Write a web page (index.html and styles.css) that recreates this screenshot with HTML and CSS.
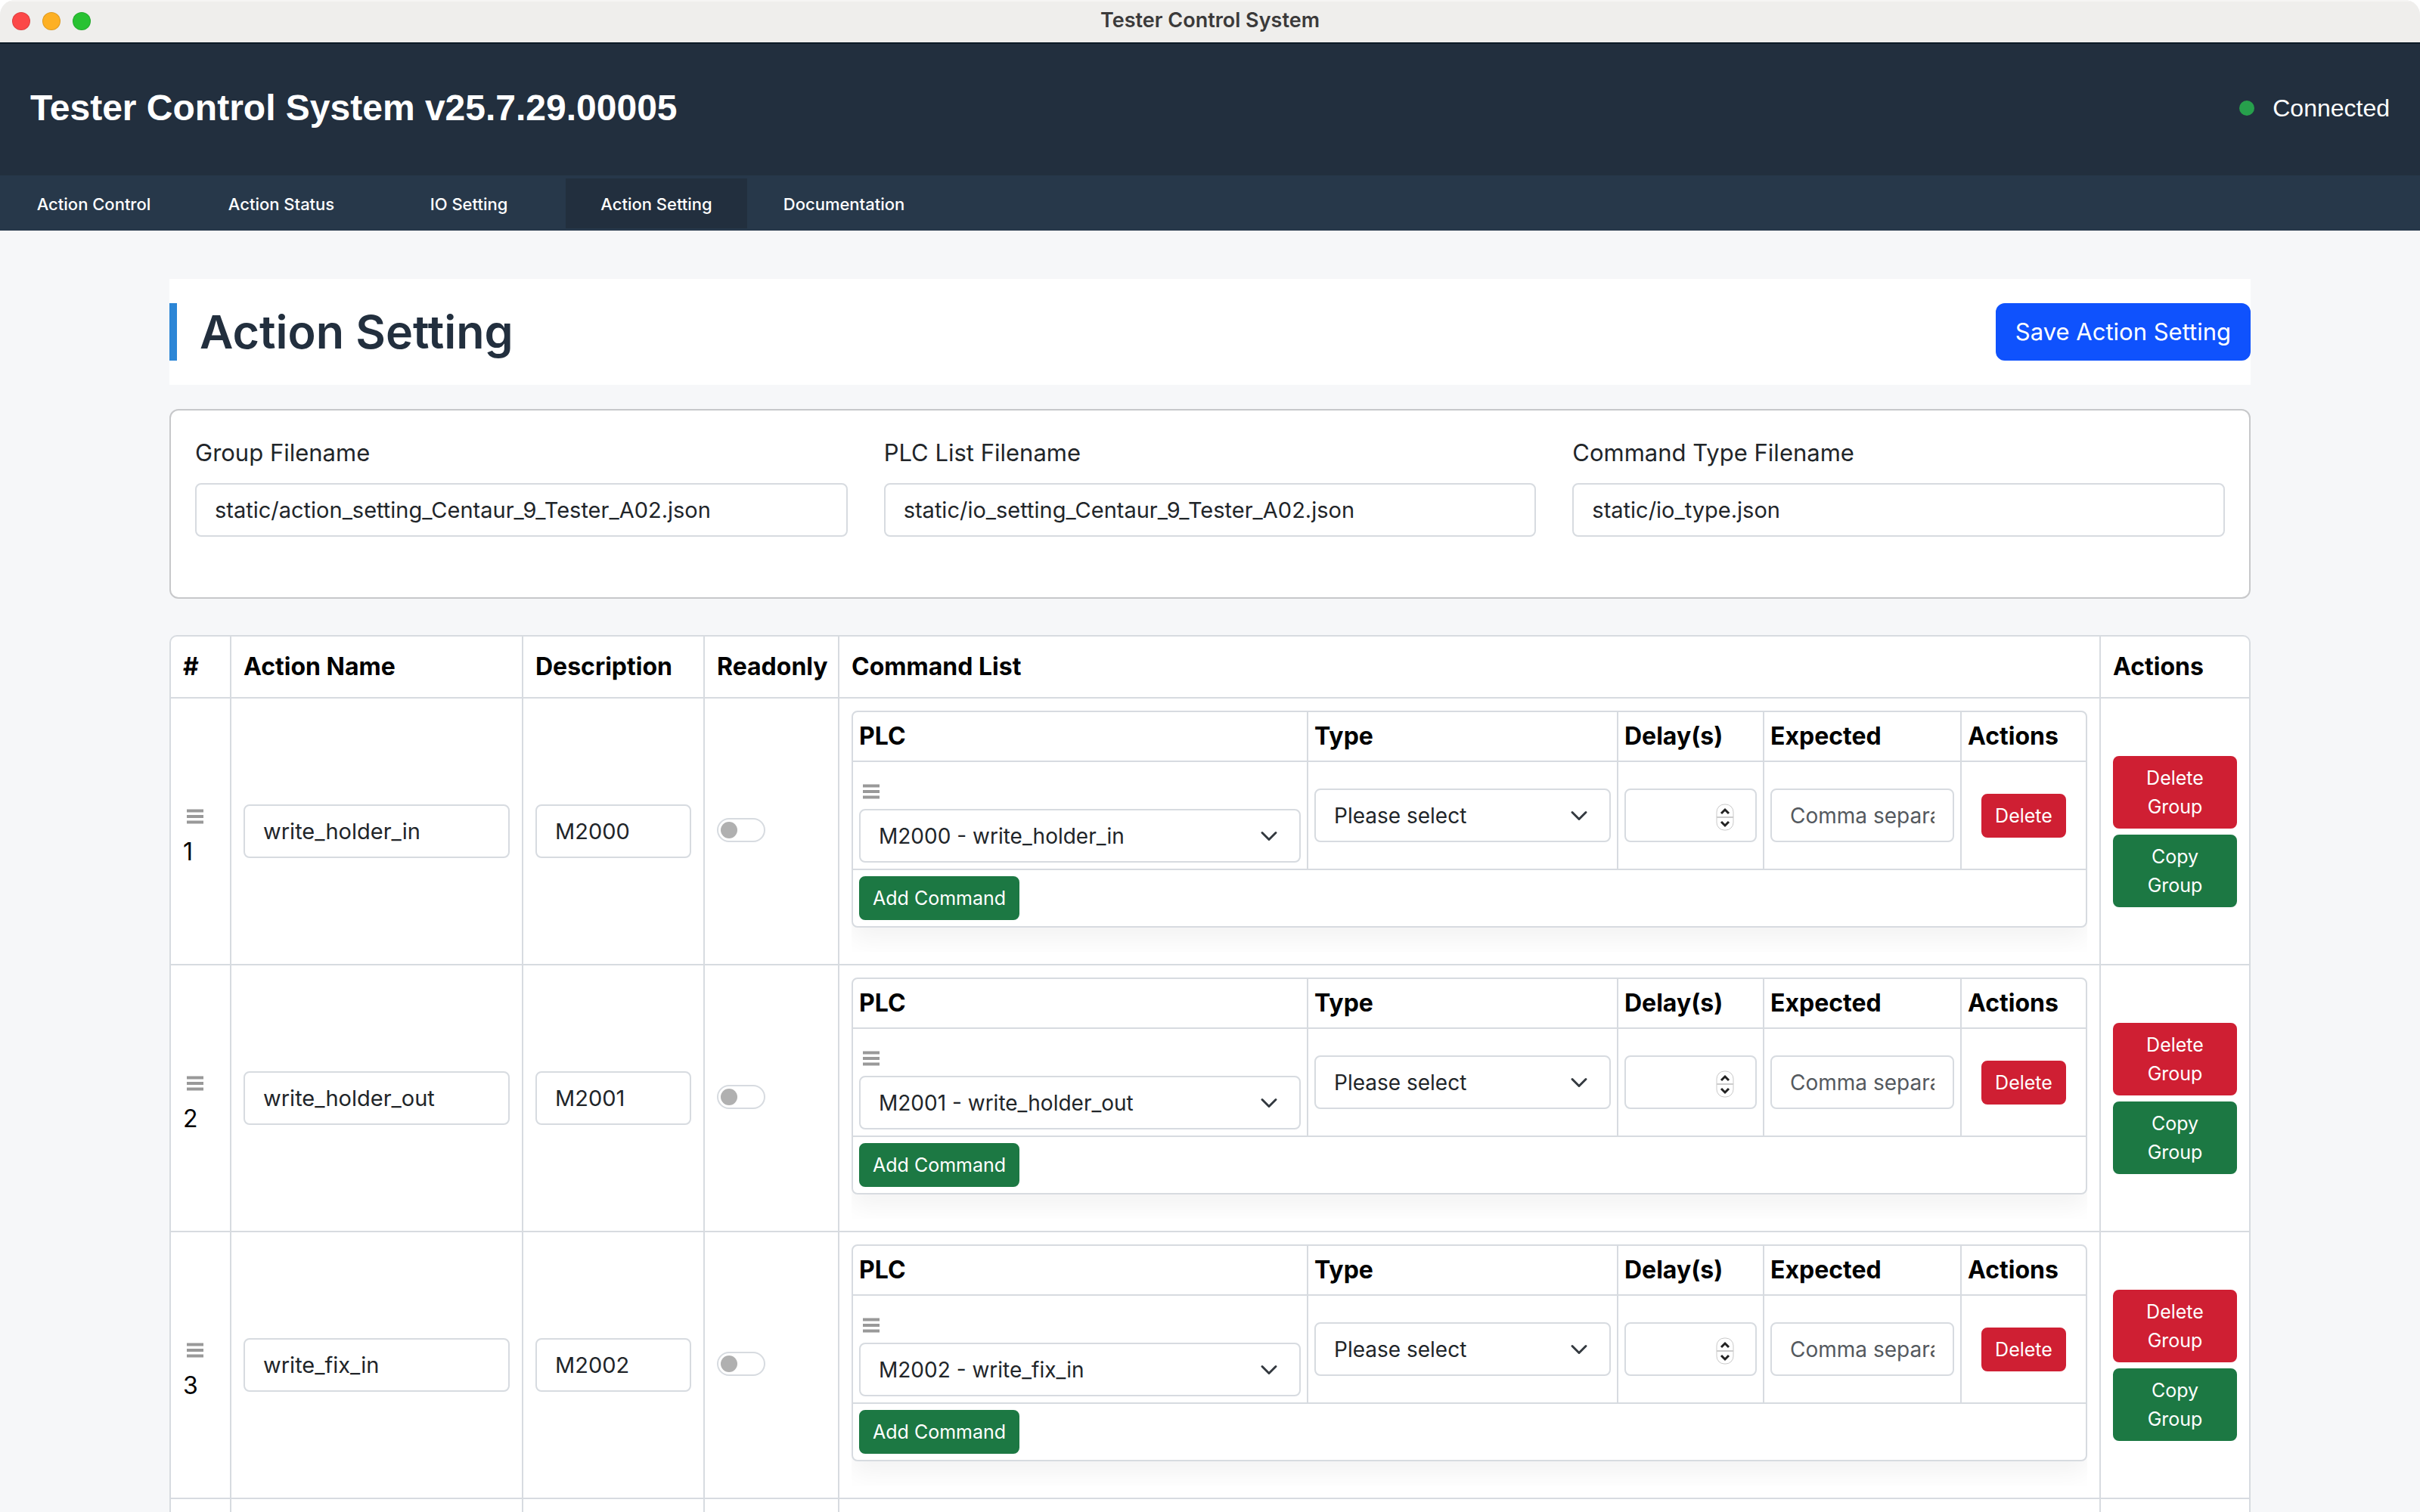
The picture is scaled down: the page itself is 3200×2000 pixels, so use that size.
FILE: index.html
```html
<!DOCTYPE html>
<html lang="en">
<head>
<meta charset="utf-8">
<title>Tester Control System</title>
<link rel="stylesheet" href="styles.css">
</head>
<body>
<div class="window">
  <div class="titlebar">
    <div class="lights"><span class="light close"></span><span class="light minimize"></span><span class="light maximize"></span></div>
    <div class="titlebar-text">Tester Control System</div>
  </div>
  <header class="app-header">
    <h1 class="app-title">Tester Control System v25.7.29.00005</h1>
    <div class="status"><span class="status-dot"></span>Connected</div>
  </header>
  <nav class="tabs">
    <a class="tab" href="#control">Action Control</a>
    <a class="tab" href="#status">Action Status</a>
    <a class="tab" href="#io">IO Setting</a>
    <a class="tab active" href="#setting">Action Setting</a>
    <a class="tab" href="#docs">Documentation</a>
  </nav>
  <main class="content">
    <div class="page-head">
      <h2 class="page-title">Action Setting</h2>
      <button class="btn primary" type="button">Save Action Setting</button>
    </div>
    <section class="files">
      <div class="field"><label for="group-file">Group Filename</label><input class="control" id="group-file" type="text" value="static/action_setting_Centaur_9_Tester_A02.json"></div>
      <div class="field"><label for="plc-file">PLC List Filename</label><input class="control" id="plc-file" type="text" value="static/io_setting_Centaur_9_Tester_A02.json"></div>
      <div class="field"><label for="type-file">Command Type Filename</label><input class="control" id="type-file" type="text" value="static/io_type.json"></div>
    </section>
    <table class="grid groups">
      <colgroup><col class="c-num"><col class="c-name"><col class="c-desc"><col class="c-ro"><col><col class="c-act"></colgroup>
      <thead><tr><th>#</th><th>Action Name</th><th>Description</th><th>Readonly</th><th>Command List</th><th>Actions</th></tr></thead>
      <tbody>
        <tr>
          <td><svg class="handle" viewBox="0 0 22 20" aria-hidden="true"><path d="M0 2.5h22M0 10h22M0 17.5h22"/></svg>1</td>
          <td><input class="control" type="text" aria-label="Action name" value="write_holder_in"></td>
          <td><input class="control" type="text" aria-label="Description" value="M2000"></td>
          <td><input class="switch" type="checkbox" aria-label="Readonly"></td>
          <td>
            <div class="commands">
              <table class="grid inner">
                <colgroup><col><col class="c-type"><col class="c-delay"><col class="c-exp"><col class="c-del"></colgroup>
                <thead><tr><th>PLC</th><th>Type</th><th>Delay(s)</th><th>Expected</th><th>Actions</th></tr></thead>
                <tbody>
                  <tr>
                    <td><svg class="handle" viewBox="0 0 22 20" aria-hidden="true"><path d="M0 2.5h22M0 10h22M0 17.5h22"/></svg><div class="pick"><select class="control" aria-label="PLC"><option>M2000 - write_holder_in</option></select><svg class="chevron" viewBox="0 0 16 16" aria-hidden="true"><path d="m2 5 6 6 6-6"/></svg></div></td>
                    <td><div class="pick"><select class="control" aria-label="Type"><option>Please select</option></select><svg class="chevron" viewBox="0 0 16 16" aria-hidden="true"><path d="m2 5 6 6 6-6"/></svg></div></td>
                    <td><div class="pick"><input class="control" type="number" aria-label="Delay in seconds"><svg class="stepper" viewBox="0 0 24 36" aria-hidden="true"><rect x="1" y="1" width="22" height="34" rx="10"/><path class="split" d="M1 18h22"/><path d="m7 13 5-5 5 5M7 24l5 5 5-5"/></svg></div></td>
                    <td><input class="control" type="text" aria-label="Expected" placeholder="Comma separated"></td>
                    <td class="center"><button class="btn small danger" type="button">Delete</button></td>
                  </tr>
                  <tr><td colspan="5"><button class="btn small success" type="button">Add Command</button></td></tr>
                </tbody>
              </table>
            </div>
          </td>
          <td><div class="stack"><button class="btn small danger" type="button">Delete Group</button><button class="btn small success" type="button">Copy Group</button></div></td>
        </tr>
        <tr>
          <td><svg class="handle" viewBox="0 0 22 20" aria-hidden="true"><path d="M0 2.5h22M0 10h22M0 17.5h22"/></svg>2</td>
          <td><input class="control" type="text" aria-label="Action name" value="write_holder_out"></td>
          <td><input class="control" type="text" aria-label="Description" value="M2001"></td>
          <td><input class="switch" type="checkbox" aria-label="Readonly"></td>
          <td>
            <div class="commands">
              <table class="grid inner">
                <colgroup><col><col class="c-type"><col class="c-delay"><col class="c-exp"><col class="c-del"></colgroup>
                <thead><tr><th>PLC</th><th>Type</th><th>Delay(s)</th><th>Expected</th><th>Actions</th></tr></thead>
                <tbody>
                  <tr>
                    <td><svg class="handle" viewBox="0 0 22 20" aria-hidden="true"><path d="M0 2.5h22M0 10h22M0 17.5h22"/></svg><div class="pick"><select class="control" aria-label="PLC"><option>M2001 - write_holder_out</option></select><svg class="chevron" viewBox="0 0 16 16" aria-hidden="true"><path d="m2 5 6 6 6-6"/></svg></div></td>
                    <td><div class="pick"><select class="control" aria-label="Type"><option>Please select</option></select><svg class="chevron" viewBox="0 0 16 16" aria-hidden="true"><path d="m2 5 6 6 6-6"/></svg></div></td>
                    <td><div class="pick"><input class="control" type="number" aria-label="Delay in seconds"><svg class="stepper" viewBox="0 0 24 36" aria-hidden="true"><rect x="1" y="1" width="22" height="34" rx="10"/><path class="split" d="M1 18h22"/><path d="m7 13 5-5 5 5M7 24l5 5 5-5"/></svg></div></td>
                    <td><input class="control" type="text" aria-label="Expected" placeholder="Comma separated"></td>
                    <td class="center"><button class="btn small danger" type="button">Delete</button></td>
                  </tr>
                  <tr><td colspan="5"><button class="btn small success" type="button">Add Command</button></td></tr>
                </tbody>
              </table>
            </div>
          </td>
          <td><div class="stack"><button class="btn small danger" type="button">Delete Group</button><button class="btn small success" type="button">Copy Group</button></div></td>
        </tr>
        <tr>
          <td><svg class="handle" viewBox="0 0 22 20" aria-hidden="true"><path d="M0 2.5h22M0 10h22M0 17.5h22"/></svg>3</td>
          <td><input class="control" type="text" aria-label="Action name" value="write_fix_in"></td>
          <td><input class="control" type="text" aria-label="Description" value="M2002"></td>
          <td><input class="switch" type="checkbox" aria-label="Readonly"></td>
          <td>
            <div class="commands">
              <table class="grid inner">
                <colgroup><col><col class="c-type"><col class="c-delay"><col class="c-exp"><col class="c-del"></colgroup>
                <thead><tr><th>PLC</th><th>Type</th><th>Delay(s)</th><th>Expected</th><th>Actions</th></tr></thead>
                <tbody>
                  <tr>
                    <td><svg class="handle" viewBox="0 0 22 20" aria-hidden="true"><path d="M0 2.5h22M0 10h22M0 17.5h22"/></svg><div class="pick"><select class="control" aria-label="PLC"><option>M2002 - write_fix_in</option></select><svg class="chevron" viewBox="0 0 16 16" aria-hidden="true"><path d="m2 5 6 6 6-6"/></svg></div></td>
                    <td><div class="pick"><select class="control" aria-label="Type"><option>Please select</option></select><svg class="chevron" viewBox="0 0 16 16" aria-hidden="true"><path d="m2 5 6 6 6-6"/></svg></div></td>
                    <td><div class="pick"><input class="control" type="number" aria-label="Delay in seconds"><svg class="stepper" viewBox="0 0 24 36" aria-hidden="true"><rect x="1" y="1" width="22" height="34" rx="10"/><path class="split" d="M1 18h22"/><path d="m7 13 5-5 5 5M7 24l5 5 5-5"/></svg></div></td>
                    <td><input class="control" type="text" aria-label="Expected" placeholder="Comma separated"></td>
                    <td class="center"><button class="btn small danger" type="button">Delete</button></td>
                  </tr>
                  <tr><td colspan="5"><button class="btn small success" type="button">Add Command</button></td></tr>
                </tbody>
              </table>
            </div>
          </td>
          <td><div class="stack"><button class="btn small danger" type="button">Delete Group</button><button class="btn small success" type="button">Copy Group</button></div></td>
        </tr>
        <tr><td></td><td></td><td></td><td></td><td></td><td></td></tr>
      </tbody>
    </table>
  </main>
</div>
</body>
</html>
```
FILE: styles.css
```css
* { box-sizing: border-box; }

html { background: #fff; }

body {
  margin: 0;
  font-family: Inter, "Noto Sans", sans-serif;
  font-size: 31px;
  line-height: 48px;
  color: #212529;
}

.window {
  display: flex;
  flex-direction: column;
  height: 100vh;
  overflow: hidden;
  border-radius: 20px 20px 0 0;
  background: #f6f7f9;
}

/* Window title bar */
.titlebar {
  display: grid;
  grid-template-columns: 1fr auto 1fr;
  align-items: center;
  flex: none;
  height: 56px;
  padding: 0 16px;
  background: #efeeec;
  box-shadow: inset 0 2px #f6f5f4;
}
.lights { display: flex; gap: 16px; }
.light { width: 24px; height: 24px; border-radius: 50%; border: 1px solid rgba(0, 0, 0, .12); }
.close { background: #fc4848; }
.minimize { background: #fdb024; }
.maximize { background: #28c232; }
.titlebar-text { padding-bottom: 2px; font-size: 27px; font-weight: 600; color: #3b3a3a; }

/* App header and tabs */
.app-header {
  display: flex;
  align-items: center;
  justify-content: space-between;
  flex: none;
  height: 176px;
  padding: 0 40px 4px;
  border-top: 2px solid #0d1a26;
  background: #222f3e;
  color: #fff;
  font-family: "Liberation Sans", Arial, sans-serif;
  font-size: 32px;
}
.app-title { margin: 0; font-size: 48px; font-weight: 700; }
.status { display: flex; align-items: center; gap: 24px; }
.status-dot { width: 20px; height: 20px; border-radius: 50%; background: #27a04c; }

.tabs {
  display: flex;
  gap: 8px;
  flex: none;
  height: 73px;
  padding: 4px 4px 3px;
  background: #27384a;
}
.tab {
  display: flex;
  align-items: center;
  justify-content: center;
  width: 240px;
  padding-top: 2px;
  color: #fff;
  font-size: 22px;
  font-weight: 500;
  text-decoration: none;
}
.tab.active { background: #222f3e; }

/* Page */
.content { flex: 1; min-height: 0; overflow: hidden; padding: 64px 7% 0; }

.page-head {
  display: flex;
  align-items: center;
  justify-content: space-between;
  padding: 32px 0;
  background: #fff;
}
.page-title {
  margin: 0;
  padding-left: 30px;
  border-left: 10px solid #2c86d6;
  color: #222f3e;
  font-size: 61px;
  font-weight: 600;
  line-height: 76px;
}

.files {
  display: grid;
  grid-template-columns: repeat(3, 1fr);
  gap: 48px;
  margin: 32px 0 48px;
  padding: 32px 32px 80px;
  border: 2px solid #c7c8ca;
  border-radius: 12px;
  background: #fff;
}
.field label { display: block; margin-bottom: 16px; }

.control {
  display: block;
  width: 100%;
  height: 71px;
  margin: 0;
  padding: 0 24px;
  border: 2px solid #d7dbe0;
  border-radius: 8px;
  background: #fff;
  color: #212529;
  font: inherit;
  font-size: 29px;
  appearance: none;
}
select.control { font-size: 28px; }
.control::placeholder { color: #54595e; opacity: 1; font-size: 28px; }
.control[type="number"] { appearance: textfield; }

.pick { display: grid; align-items: center; }
.pick > * { grid-area: 1 / 1; }
.pick svg { justify-self: end; margin-right: 30px; pointer-events: none; fill: none; }
.chevron { width: 24px; height: 24px; stroke: #343a40; stroke-width: 2; stroke-linecap: round; stroke-linejoin: round; }
.stepper { width: 24px; height: 36px; margin-top: 4px; stroke: #222; stroke-width: 3; }
.stepper rect { fill: #fff; stroke: #c9c9c9; stroke-width: 1; }
.stepper .split { stroke: #ccc; stroke-width: 2; }

.switch {
  display: block;
  width: 64px;
  height: 32px;
  margin: 0 0 4px;
  padding: 3px;
  border: 2px solid #d7dbe0;
  border-radius: 16px;
  background: #fff;
  appearance: none;
}
.switch::before { content: ""; display: block; width: 22px; height: 22px; border-radius: 50%; background: #b0b0b0; }

.btn {
  padding: 12px 24px;
  border: 2px solid transparent;
  border-radius: 12px;
  color: #fff;
  font: inherit;
  font-size: 31px;
  line-height: 48px;
}
.primary { background: #0f52fd; border-color: #0f52fd; }
.small { padding: 8px 16px; border-radius: 8px; font-size: 25px; line-height: 38px; }
.danger { background: #cf1f33; border-color: #cf1f33; }
.success { background: #1c7843; border-color: #1c7843; }
.stack { display: flex; flex-direction: column; gap: 8px; }

/* Tables */
.grid {
  width: 100%;
  table-layout: fixed;
  border: 2px solid #d7dbe0;
  border-radius: 10px;
  border-collapse: separate;
  border-spacing: 0;
  background: #fff;
  color: #000;
  font-size: 32px;
}
.grid th, .grid td {
  padding: 16px;
  border-right: 2px solid #d7dbe0;
  border-bottom: 2px solid #d7dbe0;
  text-align: left;
  vertical-align: middle;
}
.grid th { font-weight: 700; white-space: nowrap; }
.grid tr > :last-child { border-right: 0; }
.grid tbody tr:last-child > td { border-bottom: 0; }

.c-num { width: 80px; }
.c-name { width: 386px; }
.c-desc { width: 240px; }
.c-ro { width: 178px; }
.c-act { width: 196px; }

.commands { overflow: hidden; padding-bottom: 32px; }
.inner { box-shadow: 0 16px 32px rgba(0, 0, 0, .05); border-radius: 8px; }
.inner th, .inner td { padding: 8px; }
.inner .center { text-align: center; }
.inner .btn { display: inline-block; vertical-align: top; }
.c-type { width: 410px; }
.c-delay { width: 193px; }
.c-exp { width: 261px; }
.c-del { width: 164px; }

.handle { display: block; width: 22px; height: 20px; margin: 21px 5px 13px; stroke: #999; stroke-width: 4; }
```
